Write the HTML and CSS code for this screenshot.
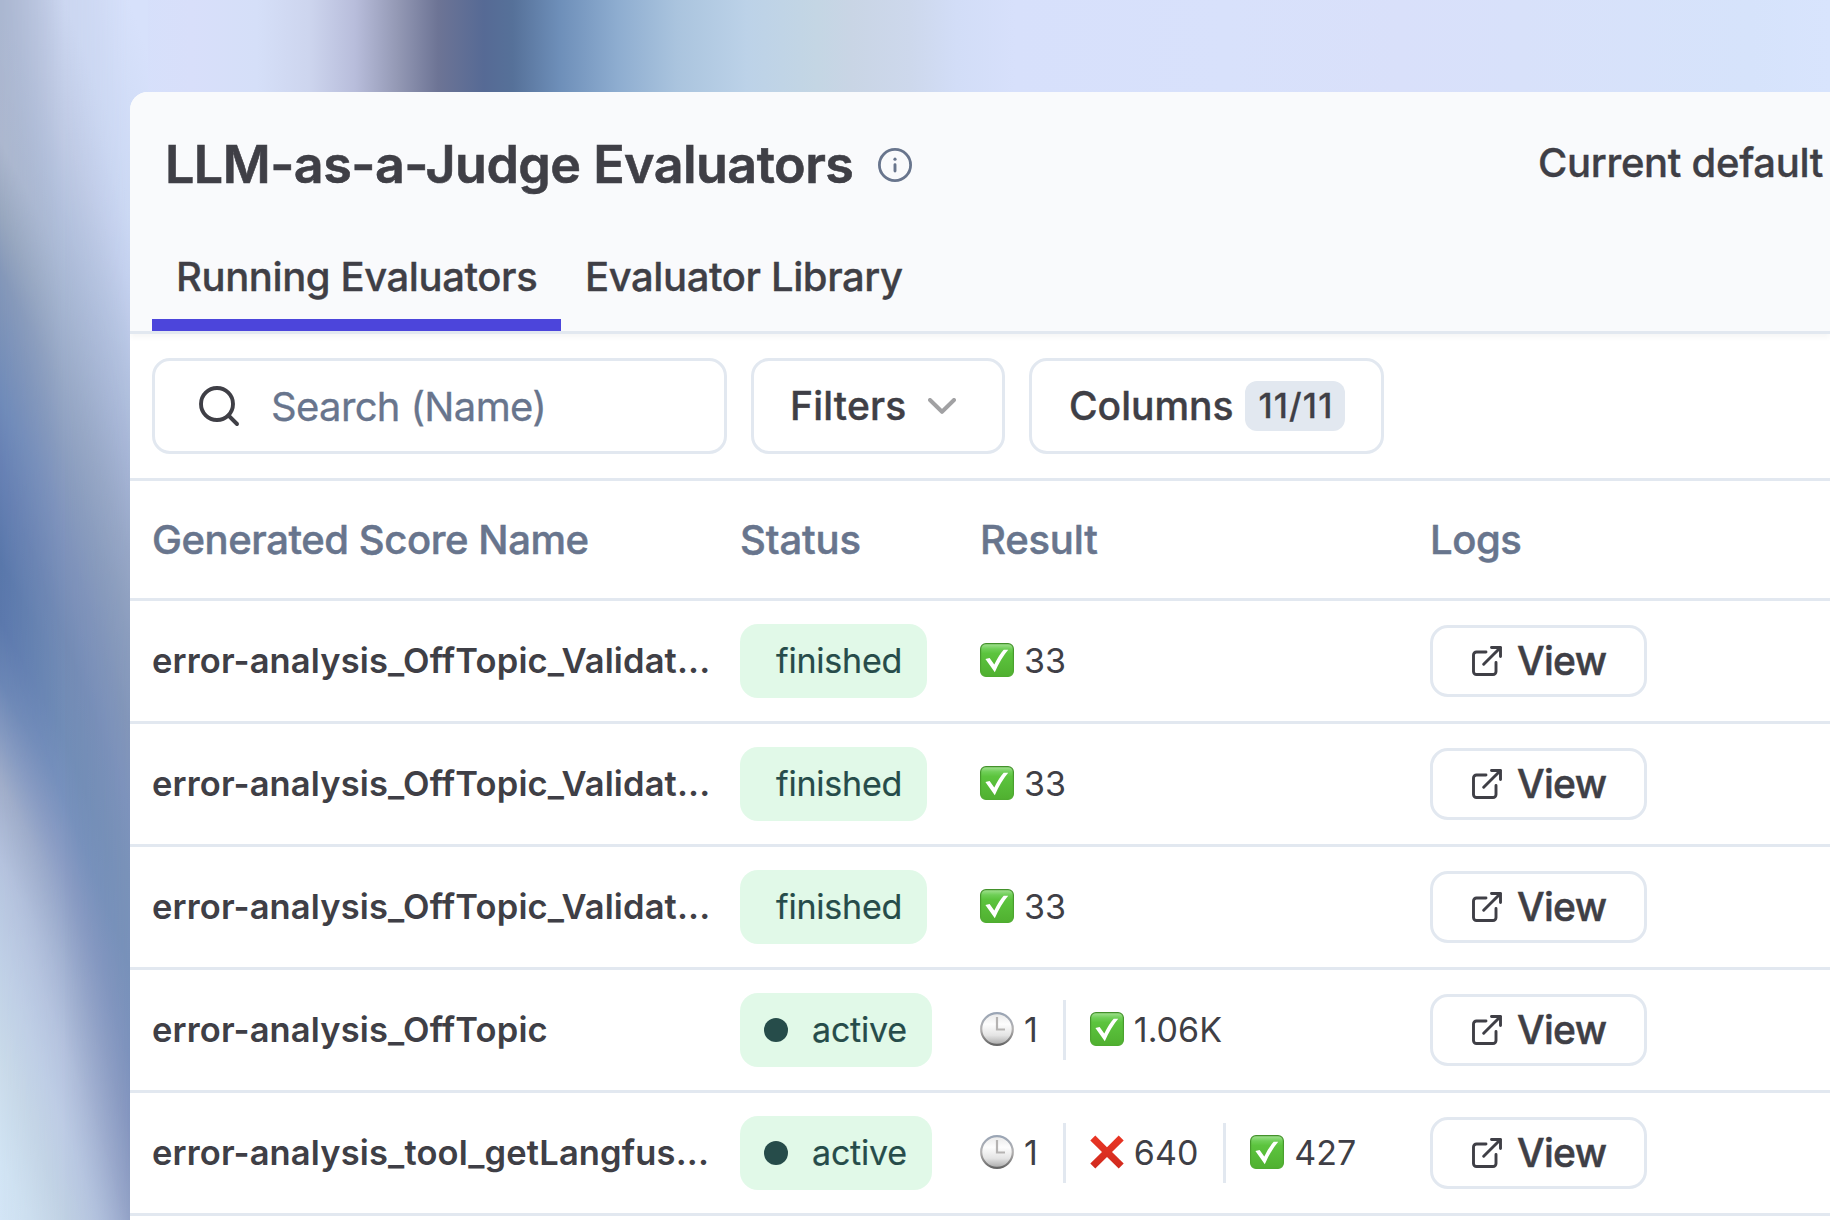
FILE: index.html
```html
<!DOCTYPE html>
<html lang="en">
<head>
<meta charset="utf-8">
<title>LLM-as-a-Judge Evaluators</title>
<link rel="stylesheet" href="styles.css">
</head>
<body>
<svg class="defs" width="0" height="0" aria-hidden="true">
  <defs>
    <linearGradient id="green" x1="0" y1="0" x2="0" y2="1">
      <stop offset="0" stop-color="#a5e294"/><stop offset=".16" stop-color="#6fcf57"/><stop offset=".3" stop-color="#5cc43e"/><stop offset="1" stop-color="#50b030"/>
    </linearGradient>
    <linearGradient id="greenEdge" x1="0" y1="0" x2="0" y2="1">
      <stop offset="0" stop-color="#43912b"/><stop offset="1" stop-color="#4fac30"/>
    </linearGradient>
    <linearGradient id="red" x1="0" y1="0" x2="0" y2="1">
      <stop offset="0" stop-color="#ea3524"/><stop offset="1" stop-color="#d02a1e"/>
    </linearGradient>
    <linearGradient id="rim" x1="0" y1="0" x2="0" y2="1">
      <stop offset="0" stop-color="#9aa5b5"/><stop offset=".5" stop-color="#b4b2b2"/><stop offset="1" stop-color="#666"/>
    </linearGradient>
    <linearGradient id="face" x1="0" y1="0" x2="0" y2="1">
      <stop offset="0" stop-color="#e9e9e9"/><stop offset=".35" stop-color="#fdfdfd"/><stop offset=".7" stop-color="#e4e4e4"/><stop offset="1" stop-color="#a9a9a9"/>
    </linearGradient>
    <symbol id="check" viewBox="0 0 34 34">
      <rect x=".6" y=".6" width="32.8" height="32.8" rx="5.4" fill="url(#green)" stroke="url(#greenEdge)" stroke-width="1.2"/>
      <path d="M5.400 16 9.600 15 14.300 21.600Q18.500 12.500 23.700 6.700L28.200 6.700Q20.800 15.500 14.800 29.200Z" fill="#fff"/>
    </symbol>
    <symbol id="cross" viewBox="0 0 34 34">
      <path d="M5.300.5 17 12.200 28.700.5 33.700 5.400 22 17 33.700 28.600 28.700 33.600 17 21.900 5.300 33.600.3 28.600 12 17 .3 5.400Z" fill="url(#red)"/>
    </symbol>
    <symbol id="clock" viewBox="0 0 34 34">
      <circle cx="17" cy="17" r="15.800" fill="url(#face)" stroke="url(#rim)" stroke-width="2.200"/>
      <path d="M17 5V17.500H25" fill="none" stroke="#b5b3b2" stroke-width="2.200"/>
    </symbol>
    <symbol id="external" viewBox="0 0 30 30">
      <g fill="none" stroke="#3f3f46" stroke-width="2.900" stroke-linecap="round" stroke-linejoin="round">
        <path d="M14 6H4.500A3 3 0 0 0 1.500 9V25.500A3 3 0 0 0 4.500 28.500H21A3 3 0 0 0 24 25.500V16.500"/>
        <path d="M19.500 1.500H28.500V10.500M28.500 1.500 11.700 18.300"/>
      </g>
    </symbol>
  </defs>
</svg>

<div class="backdrop">
  <div class="ramp ramp-left"></div>
  <div class="ramp ramp-middle"></div>
  <div class="ramp ramp-right"></div>
</div>

<main class="panel">
  <header class="header">
    <div class="title-row">
      <h1 class="title">LLM-as-a-Judge Evaluators</h1>
      <svg class="info" viewBox="0 0 34 34"><circle cx="17" cy="17" r="15.600" fill="none" stroke="#68758d" stroke-width="2.800"/><circle cx="17" cy="11.200" r="1.600" fill="#68758d"/><path d="M17 16.700V23" stroke="#68758d" stroke-width="2.900" stroke-linecap="round"/></svg>
      <span class="default-model">Current default</span>
    </div>
    <nav class="tabs">
      <a class="tab tab-active">Running Evaluators</a>
      <a class="tab">Evaluator Library</a>
    </nav>
  </header>

  <div class="toolbar">
    <div class="control search">
      <svg class="search-icon" viewBox="0 0 42 42"><circle cx="19" cy="19" r="16" /><path d="M30.500 30.500 39 39"/></svg>
      <span class="placeholder">Search (Name)</span>
    </div>
    <div class="control filters">
      <span class="label">Filters</span>
      <svg class="chevron" viewBox="0 0 28 16"><path d="M2 2 14 13.800 26 2"/></svg>
    </div>
    <div class="control columns">
      <span class="label">Columns</span>
      <span class="count">11/11</span>
    </div>
  </div>

  <section class="table">
    <div class="row head">
      <span>Generated Score Name</span><span class="tight">Status</span><span class="tight result-head">Result</span><span>Logs</span>
    </div>
    <div class="row">
      <span class="name">error-analysis_OffTopic_Validat...</span>
      <div><span class="pill">finished</span></div>
      <div class="results"><span class="result"><svg><use href="#check"/></svg>33</span></div>
      <div><span class="view"><svg><use href="#external"/></svg>View</span></div>
    </div>
    <div class="row">
      <span class="name">error-analysis_OffTopic_Validat...</span>
      <div><span class="pill">finished</span></div>
      <div class="results"><span class="result"><svg><use href="#check"/></svg>33</span></div>
      <div><span class="view"><svg><use href="#external"/></svg>View</span></div>
    </div>
    <div class="row">
      <span class="name">error-analysis_OffTopic_Validat...</span>
      <div><span class="pill">finished</span></div>
      <div class="results"><span class="result"><svg><use href="#check"/></svg>33</span></div>
      <div><span class="view"><svg><use href="#external"/></svg>View</span></div>
    </div>
    <div class="row">
      <span class="name">error-analysis_OffTopic</span>
      <div><span class="pill pill-active"><i class="dot"></i>active</span></div>
      <div class="results"><span class="result"><svg><use href="#clock"/></svg>1</span><span class="result"><svg><use href="#check"/></svg>1.06K</span></div>
      <div><span class="view"><svg><use href="#external"/></svg>View</span></div>
    </div>
    <div class="row">
      <span class="name">error-analysis_tool_getLangfus...</span>
      <div><span class="pill pill-active"><i class="dot"></i>active</span></div>
      <div class="results"><span class="result"><svg><use href="#clock"/></svg>1</span><span class="result"><svg><use href="#cross"/></svg>640</span><span class="result"><svg><use href="#check"/></svg>427</span></div>
      <div><span class="view"><svg><use href="#external"/></svg>View</span></div>
    </div>
  </section>
</main>
</body>
</html>
```
FILE: styles.css
```css
* { box-sizing: border-box; }

body {
  margin: 0;
  height: 1220px;
  overflow: hidden;
  padding: 92px 0 0 130px;
  font-family: Inter, "Liberation Sans", sans-serif;
  color: #3f3f46;
  white-space: nowrap;
  background: linear-gradient(90deg,
    #abb7d1 0, #c3cee6 58px, #d5e0fb 117px, #d8dffa 192px, #d5dff8 257px,
    #cdd5ee 309px, #b8bddb 355px, #9499b5 397px, #6d7495 438px, #566a95 484px,
    #567199 513px, #6e8fb9 560px, #8eadd0 618px, #aac4de 677px, #bcd2e8 747px,
    #c4d6e4 817px, #c9d5e5 852px, #cdd8ec 910px, #d2ddf7 957px, #d7e0fb 1015px,
    #d8e1fb 1225px, #d9e0fa 1400px, #d8e1fa 1517px, #d6e3fb 1750px, #d8e4fd 1830px);
}

.defs { position: absolute; }

/* Left part of the wallpaper: three slanted ramps, cross-faded left to right */
.backdrop {
  position: absolute;
  left: 0;
  top: 0;
  width: 148px;
  height: 1220px;
  overflow: hidden;
}

.ramp {
  position: absolute;
  inset: -600px 0;
}

.ramp-left {
  transform: skewY(62deg);
  transform-origin: 0 50%;
  background: linear-gradient(180deg,
    #abb7d1 600px, #adb8cf 740px, #99a8bf 810px, #8598b9 870px, #6f8bba 1000px,
    #6680b4 1070px, #5977ab 1160px, #5b78ad 1220px, #6a86b5 1280px, #8499c0 1330px,
    #a0adc9 1380px, #b5c3de 1460px, #bfcfe6 1550px, #cadbea 1660px, #d1e4f4 1760px, #d3e5f6 1820px);
}

.ramp-middle {
  transform: skewY(69deg);
  transform-origin: 65px 50%;
  background: linear-gradient(180deg,
    #ccd7f1 600px, #bfcae4 740px, #b4c2de 810px, #a6b6d2 900px, #97a8c6 990px,
    #899cbf 1070px, #7f93bc 1140px, #738bb5 1240px, #718db7 1340px, #7791bd 1400px,
    #8a9cc4 1470px, #a0b0d0 1560px, #b3c1dd 1650px, #bccbe4 1730px, #bfd0e3 1820px, #cfe0ef 2028px);
  mask-image: linear-gradient(90deg, transparent 0, #000 65px);
}

.ramp-right {
  transform: skewY(71deg);
  transform-origin: 130px 50%;
  background: linear-gradient(180deg,
    #d7e1fb 600px, #d3def8 692px, #cbd8f3 820px, #c3d0ee 890px, #b3c2e0 980px,
    #a5b4d5 1070px, #96a6c6 1160px, #8b9dbd 1240px, #8296b9 1330px, #7e93bc 1410px,
    #7a92b9 1480px, #7891b9 1570px, #7d92bc 1660px, #8596bf 1730px, #92a1c6 1820px,
    #a3b3d3 1900px, #bccbe2 2028px);
  mask-image: linear-gradient(90deg, transparent 65px, #000 130px);
}

.panel {
  position: relative;
  height: 1128px;
  overflow: hidden;
  background: #fff;
  border-top-left-radius: 18px;
}

.header {
  position: relative;
  height: 242px;
  padding-top: 36px;
  background: #f9fafc;
  border-bottom: 3px solid #e2e8f0;
  box-shadow: 0 3px 6px rgba(0, 0, 0, .045);
}

.title-row {
  display: flex;
  align-items: center;
  height: 72px;
  padding-left: 35px;
}

.title {
  width: 688px;
  margin: 0;
  font-size: 52px;
  font-weight: 600;
  letter-spacing: -.53px;
  -webkit-text-stroke: .6px;
}

.info { width: 34px; height: 34px; margin: 1px 0 0 25px; }

.default-model {
  width: 292px;
  margin-left: auto;
  padding-bottom: 3px;
  font-size: 40px;
  font-weight: 500;
  letter-spacing: -.3px;
  -webkit-text-stroke: .35px;
}

.tabs {
  display: flex;
  margin-top: 22px;
  padding-left: 22px;
}

.tab {
  height: 109px;
  padding: 0 24px;
  font-size: 40px;
  font-weight: 500;
  line-height: 109px;
  letter-spacing: -.4px;
  -webkit-text-stroke: .35px;
}

.tab-active { width: 409px; box-shadow: inset 0 -12px #4c45db; }

.toolbar {
  display: flex;
  align-items: center;
  gap: 24px;
  height: 147px;
  padding-left: 22px;
  border-bottom: 3px solid #e2e8f0;
}

.control {
  display: flex;
  align-items: center;
  height: 96px;
  border: 3px solid #e2e8f0;
  border-radius: 18px;
  font-size: 39px;
  font-weight: 500;
}

.label { padding-bottom: 2px; -webkit-text-stroke: .4px; }

.search { width: 575px; padding-left: 43px; }
.search-icon { width: 42px; height: 42px; fill: none; stroke: #3f3f46; stroke-width: 3.900; stroke-linecap: round; }
.placeholder { margin-left: 31px; font-size: 40px; font-weight: 400; letter-spacing: -.65px; color: #68758d; -webkit-text-stroke: .3px; }

.filters { width: 254px; padding-left: 36px; letter-spacing: .2px; }
.chevron { width: 28px; height: 16px; margin-left: 21px; fill: none; stroke: #a1a1a3; stroke-width: 4; stroke-linecap: round; stroke-linejoin: round; }

.columns { width: 355px; padding-left: 37px; }
.columns .label { width: 164px; }
.count {
  width: 100px;
  height: 50px;
  margin-left: 12px;
  padding-left: 2px;
  border-radius: 12px;
  background: #e2e8f0;
  font-size: 34px;
  line-height: 50px;
  letter-spacing: 1.200px;
  text-align: center;
  -webkit-text-stroke: .3px;
}

.row {
  display: grid;
  grid-template-columns: 588px 239px 451px 1fr;
  align-items: center;
  height: 123px;
  padding-left: 22px;
  border-bottom: 3px solid #e2e8f0;
  font-size: 34px;
}

.row > div { display: flex; }

.head {
  height: 120px;
  color: #68758d;
  font-size: 40px;
  font-weight: 500;
  letter-spacing: -.42px;
  -webkit-text-stroke: .5px;
}

.tight { letter-spacing: -.1px; }
.result-head { padding-left: 1px; letter-spacing: -.2px; }

.name { padding-bottom: 2px; font-size: 34.500px; font-weight: 600; letter-spacing: .14px; }

.pill {
  display: flex;
  align-items: center;
  width: 187px;
  height: 74px;
  padding: 0 0 2px 36px;
  border-radius: 18px;
  background: #e1f9e8;
  color: #264c4a;
  letter-spacing: -.2px;
  -webkit-text-stroke: .2px;
}

.pill-active { width: 192px; padding-left: 24px; }
.dot { width: 24px; height: 24px; margin: 2px 24px 0 0; border-radius: 50%; background: #264c4a; }

.result {
  display: flex;
  align-items: center;
  height: 60px;
  padding: 0 25px 2px 0;
}

.result svg { width: 34px; height: 34px; margin: 0 10px 0 1px; }
.result + .result { padding-left: 23px; border-left: 3px solid #e2e8f0; }

.view {
  display: flex;
  align-items: center;
  width: 217px;
  height: 72px;
  padding: 0 0 2px 39px;
  border: 3px solid #e2e8f0;
  border-radius: 18px;
  font-size: 39px;
  font-weight: 500;
  letter-spacing: -.7px;
  -webkit-text-stroke: .5px;
}

.view svg { width: 30px; height: 30px; margin: 2px 15px 0 0; }
```
